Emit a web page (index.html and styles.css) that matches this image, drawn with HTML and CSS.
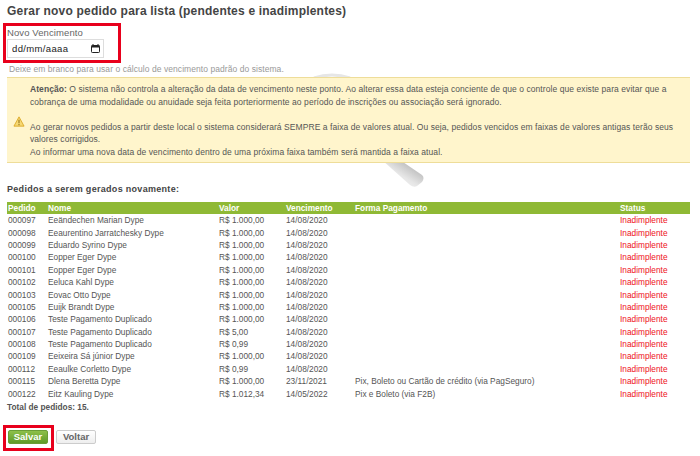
FILE: index.html
```html
<!DOCTYPE html>
<html lang="pt-BR">
<head>
<meta charset="utf-8">
<title>Gerar novo pedido</title>
<link rel="stylesheet" href="styles.css">
</head>
<body>
<svg class="watermark" width="130" height="125" viewBox="0 0 130 125">
  <defs>
    <linearGradient id="h" x1="0" y1="1" x2="1" y2="0"><stop offset="0" stop-color="#fff"/><stop offset=".45" stop-color="#e6e6e6"/><stop offset=".8" stop-color="#b8b8b8"/><stop offset="1" stop-color="#c8c8c8"/></linearGradient>
  </defs>
  <path d="M10 6 Q28 0 46 6" fill="none" stroke="#e6e6e6" stroke-width="3"/>
  <path d="M78 88 L96 88 L118 103 Q121 106 118 110 L113 114 Q110 116 106 113 Z" fill="url(#h)"/>
</svg>
<main class="page">
  <h1 class="title">Gerar novo pedido para lista (pendentes e inadimplentes)</h1>
  <div class="field">
    <label class="field-label" for="venc">Novo Vencimento</label>
    <input class="date-input" id="venc" type="text" value="dd/mm/aaaa" readonly>
    <svg class="cal" width="9" height="9" viewBox="0 0 9 9"><path d="M2 0v1.500M7 0v1.500" stroke="#222"/><rect x=".5" y="1.500" width="8" height="7" rx=".8" fill="none" stroke="#222"/><rect x=".5" y="1.500" width="8" height="2" fill="#222"/></svg>
  </div>
  <p class="hint">Deixe em branco para usar o cálculo de vencimento padrão do sistema.</p>
  <section class="notice">
    <svg class="warn" width="12" height="11" viewBox="0 0 14 13"><path d="M7 1 L13 12 H1 Z" fill="#f6d873" stroke="#d9a520" stroke-width="1" stroke-linejoin="round"/><path d="M7 4.500v4M7 9.500v1.300" stroke="#8a6a14" stroke-width="1.200"/></svg>
    <div class="notice-text">
      <p><b>Atenção:</b> O sistema não controla a alteração da data de vencimento neste ponto. Ao alterar essa data esteja conciente de que o controle que existe para evitar que a cobrança de uma modalidade ou anuidade seja feita porteriormente ao período de inscrições ou associação será ignorado.</p>
      <p class="gap">Ao gerar novos pedidos a partir deste local o sistema considerará SEMPRE a faixa de valores atual. Ou seja, pedidos vencidos em faixas de valores antigas terão seus valores corrigidos.</p>
      <p>Ao informar uma nova data de vencimento dentro de uma próxima faixa também será mantida a faixa atual.</p>
    </div>
  </section>
  <h2 class="subtitle">Pedidos a serem gerados novamente:</h2>
  <table class="orders">
    <thead><tr><th class="c1">Pedido</th><th class="c2">Nome</th><th class="c3">Valor</th><th class="c4">Vencimento</th><th class="c5">Forma Pagamento</th><th class="c6">Status</th></tr></thead>
    <tbody>
      <tr><td>000097</td><td>Eeändechen Marian Dype</td><td>R$ 1.000,00</td><td>14/08/2020</td><td></td><td class="st">Inadimplente</td></tr>
      <tr><td>000098</td><td>Eeaurentino Jarratchesky Dype</td><td>R$ 1.000,00</td><td>14/08/2020</td><td></td><td class="st">Inadimplente</td></tr>
      <tr><td>000099</td><td>Eduardo Syrino Dype</td><td>R$ 1.000,00</td><td>14/08/2020</td><td></td><td class="st">Inadimplente</td></tr>
      <tr><td>000100</td><td>Eopper Eger Dype</td><td>R$ 1.000,00</td><td>14/08/2020</td><td></td><td class="st">Inadimplente</td></tr>
      <tr><td>000101</td><td>Eopper Eger Dype</td><td>R$ 1.000,00</td><td>14/08/2020</td><td></td><td class="st">Inadimplente</td></tr>
      <tr><td>000102</td><td>Eeluca Kahl Dype</td><td>R$ 1.000,00</td><td>14/08/2020</td><td></td><td class="st">Inadimplente</td></tr>
      <tr><td>000103</td><td>Eovac Otto Dype</td><td>R$ 1.000,00</td><td>14/08/2020</td><td></td><td class="st">Inadimplente</td></tr>
      <tr><td>000105</td><td>Euijk Brandt Dype</td><td>R$ 1.000,00</td><td>14/08/2020</td><td></td><td class="st">Inadimplente</td></tr>
      <tr><td>000106</td><td>Teste Pagamento Duplicado</td><td>R$ 1.000,00</td><td>14/08/2020</td><td></td><td class="st">Inadimplente</td></tr>
      <tr><td>000107</td><td>Teste Pagamento Duplicado</td><td>R$ 5,00</td><td>14/08/2020</td><td></td><td class="st">Inadimplente</td></tr>
      <tr><td>000108</td><td>Teste Pagamento Duplicado</td><td>R$ 0,99</td><td>14/08/2020</td><td></td><td class="st">Inadimplente</td></tr>
      <tr><td>000109</td><td>Eeixeira Sá júnior Dype</td><td>R$ 1.000,00</td><td>14/08/2020</td><td></td><td class="st">Inadimplente</td></tr>
      <tr><td>000112</td><td>Eeaulke Corletto Dype</td><td>R$ 0,99</td><td>14/08/2020</td><td></td><td class="st">Inadimplente</td></tr>
      <tr><td>000115</td><td>Dlena Beretta Dype</td><td>R$ 1.000,00</td><td>23/11/2021</td><td>Pix, Boleto ou Cartão de crédito (via PagSeguro)</td><td class="st">Inadimplente</td></tr>
      <tr><td>000122</td><td>Eitz Kauling Dype</td><td>R$ 1.012,34</td><td>14/05/2022</td><td>Pix e Boleto (via F2B)</td><td class="st">Inadimplente</td></tr>
    </tbody>
  </table>
  <p class="total">Total de pedidos: 15.</p>
  <div class="actions">
    <button class="btn btn-save" type="button">Salvar</button>
    <button class="btn btn-back" type="button">Voltar</button>
  </div>
</main>
<div class="mark mark-field"></div>
<div class="mark mark-save"></div>
</body>
</html>
```
FILE: styles.css
```css
* { box-sizing: border-box; }
html, body { margin: 0; padding: 0; background: #fff; }
body { font-family: "Liberation Sans", Arial, sans-serif; font-size: 9px; color: #555; position: relative; width: 700px; height: 456px; overflow: hidden; }
.page { position: relative; padding: 3px 10px 0 7px; }
.title { margin: 0; font-size: 12px; line-height: 16px; font-weight: bold; color: #444; letter-spacing: .2px; }
.field { position: relative; margin-top: 9px; height: 28px; }
.field-label { display: block; font-size: 9.500px; line-height: 10px; color: #666; letter-spacing: .1px; }
.date-input { display: block; width: 97px; height: 19px; margin-top: 1px; padding: 0 0 0 4px; border: 1px solid #ddd; background: #fff; font-family: "Liberation Sans", Arial, sans-serif; font-size: 9.500px; letter-spacing: .35px; color: #222; outline: none; }
.cal { position: absolute; left: 84px; top: 16px; }
.hint { margin: 8px 0 0 2px; font-size: 8.500px; line-height: 10px; color: #999; letter-spacing: .06px; }
.notice { position: relative; display: flex; margin-top: 3px; height: 86px; width: 683px; padding: 5px 0 0 23px; background: #fff5cc; border-top: 1px solid #eedd99; border-bottom: 1px solid #eedd99; }
.warn { position: absolute; left: 6px; top: 38px; }
.notice-text { width: 648px; font-size: 8.500px; line-height: 12.500px; color: #555; letter-spacing: .07px; }
.notice-text p { margin: 0; }
.notice-text .gap { margin-top: 12.500px; }
.subtitle { margin: 20px 0 0; font-size: 9px; line-height: 12px; font-weight: bold; color: #444; letter-spacing: .3px; }
.orders { width: 683px; margin-top: 7px; border-collapse: collapse; table-layout: fixed; }
.orders th { height: 12px; padding: 0; background: #8fb935; color: #fff; font-size: 8.300px; line-height: 12px; font-weight: bold; text-align: left; }
.orders th.c1 { padding-left: 1px; }
.orders td { height: 12.400px; padding: 0; font-size: 8.300px; line-height: 12px; color: #555; white-space: nowrap; }
.orders td:first-child { padding-left: 1px; }
.c1 { width: 41px; } .c2 { width: 171px; } .c3 { width: 67px; } .c4 { width: 69px; } .c5 { width: 265px; }
.orders .st { color: #ee1122; }
.total { margin: 1px 0 0; font-size: 8.300px; line-height: 12px; font-weight: bold; color: #555; }
.actions { display: flex; gap: 8px; margin-top: 17px; padding-left: 1px; }
.btn { height: 14px; padding: 0; font-family: "Liberation Sans", Arial, sans-serif; font-size: 9.500px; font-weight: bold; border-radius: 2px; }
.btn-save { width: 40px; color: #fff; background: linear-gradient(#8dc04a, #5f9a28); border: 1px solid #6a9d36; }
.btn-back { width: 40px; color: #666; background: linear-gradient(#fff, #eee); border: 1px solid #ccc; }
.mark { position: absolute; border: 3px solid #e8001c; }
.mark-field { left: 3px; top: 23px; width: 118px; height: 40px; }
.mark-save { left: 3px; top: 425px; width: 51px; height: 26px; }
.watermark { position: absolute; left: 304px; top: 72px; }
```
